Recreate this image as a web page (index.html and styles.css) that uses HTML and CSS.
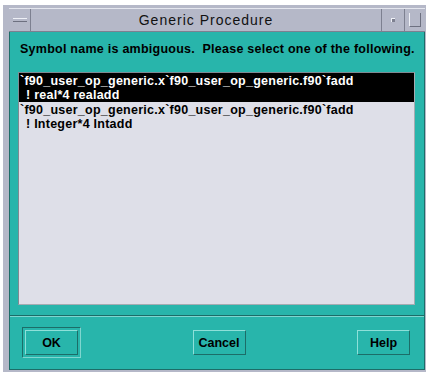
FILE: index.html
```html
<!DOCTYPE html>
<html lang="en">
<head>
  <meta charset="UTF-8">
  <title>Generic Procedure</title>
  <link rel="stylesheet" href="styles.css">
</head>
<body>

  <div class="ventana">
    <div class="titulo">
      <div class="boton-menu"><span class="raya"></span></div>
      <div class="texto-titulo">Generic Procedure</div>
      <div class="boton-min"><span class="punto"></span></div>
      <div class="boton-max"><span class="caja"></span></div>
    </div>

    <div class="contenido">
      <p class="mensaje">Symbol name is ambiguous.&nbsp; Please select one of the following.</p>

      <div class="lista">
        <div class="item activo">
          <div>`f90_user_op_generic.x`f90_user_op_generic.f90`fadd</div>
          <div class="sangria">! real*4 realadd</div>
        </div>
        <div class="item">
          <div>`f90_user_op_generic.x`f90_user_op_generic.f90`fadd</div>
          <div class="sangria">! Integer*4 Intadd</div>
        </div>
      </div>

      <div class="botonera">
        <div class="defecto"><button type="button">OK</button></div>
        <button type="button">Cancel</button>
        <button type="button">Help</button>
      </div>
    </div>
  </div>

</body>
</html>
```

FILE: styles.css
```css
body {
  margin: 0;
  background: #fff;
  font-family: 'Liberation Sans', Arial, sans-serif;
}
.ventana {
  margin: 5px 0 0 3px;
  width: 423px;
  height: 367px;
  box-sizing: border-box;
  padding: 3px 1px 2px 6px;
  background: #b5b8c8;
  display: flex;
  flex-direction: column;
}
.titulo {
  height: 24px;
  display: flex;
  border-top: 1px solid #e4e6ee;
  border-bottom: 1px solid #7d8090;
  box-sizing: border-box;
}
.boton-menu {
  width: 21px;
  border-right: 1px solid #7d8090;
  display: flex;
  align-items: center;
  justify-content: center;
}
.raya {
  width: 14px;
  height: 2px;
  border-top: 1px solid #eef0f6;
  border-bottom: 1px solid #6d7080;
}
.texto-titulo {
  flex: 1;
  text-align: center;
  font-size: 14px;
  line-height: 22px;
  color: #111;
  letter-spacing: 1px;
}
.boton-min {
  width: 22px;
  border-left: 1px solid #7d8090;
  border-right: 1px solid #7d8090;
  display: flex;
  align-items: center;
  justify-content: center;
}
.punto {
  width: 3px;
  height: 3px;
  border-top: 1px solid #eef0f6;
  border-left: 1px solid #eef0f6;
  background: #7d8090;
}
.boton-max {
  width: 20px;
  display: flex;
  align-items: center;
  justify-content: center;
}
.caja {
  width: 10px;
  height: 13px;
  border-left: 1px solid #eef0f6;
  border-right: 1px solid #6d7080;
  border-bottom: 1px solid #6d7080;
}
.contenido {
  flex: 1;
  background: #28b5ab;
  border-left: 1px solid #1c6d68;
  border-right: 1px solid #1c6d68;
  border-bottom: 1px solid #1c6d68;
  display: flex;
  flex-direction: column;
}
.mensaje {
  margin: 10px 0 0 10px;
  font-size: 12.5px;
  font-weight: bold;
  line-height: 14px;
  letter-spacing: 0.25px;
  color: #000;
}
.lista {
  margin: 16px 0 0 8px;
  width: 397px;
  height: 233px;
  box-sizing: border-box;
  background: #dedfe8;
  border: 1px solid #7f8a92;
  border-right-color: #a4acb2;
  border-bottom-color: #a4acb2;
  font-size: 12.5px;
  font-weight: bold;
  line-height: 14px;
  letter-spacing: 0.25px;
  color: #000;
}
.item {
  padding: 1px 0 0 1px;
  height: 28px;
  white-space: nowrap;
}
.item.activo {
  background: #000;
  color: #fff;
}
.sangria {
  padding-left: 6px;
}
.botonera {
  margin-top: 10px;
  border-top: 1px solid #1c6d68;
  box-shadow: inset 0 1px 0 #7fd6cf;
  display: flex;
  justify-content: space-between;
  align-items: center;
  padding: 11px 14px 0 12px;
}
.defecto {
  padding: 2px;
  border: 1px solid #1c6d68;
  border-right-color: #7fd6cf;
  border-bottom-color: #7fd6cf;
}
button {
  width: 53px;
  height: 25px;
  background: #28b5ab;
  border: 1px solid #8ee0d9;
  border-right-color: #1c6d68;
  border-bottom-color: #1c6d68;
  font-family: 'Liberation Sans', Arial, sans-serif;
  font-size: 12.5px;
  font-weight: bold;
  color: #000;
  padding: 0;
}
```
